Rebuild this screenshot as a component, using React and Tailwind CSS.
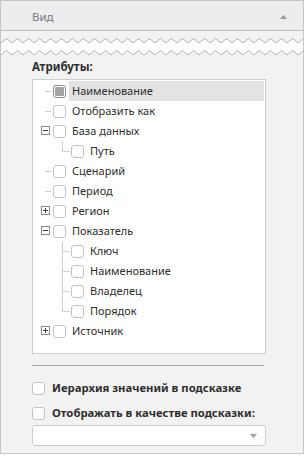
import React from "react";

function Zigzag() {
  const w = 302;
  const period = 11;
  const pts1 = [];
  const pts2 = [];
  for (let x = -period; x <= w + period; x += period) {
    pts1.push(`${x},12`, `${x + period / 2},7.5`);
    pts2.push(`${x},24`, `${x + period / 2},19.5`);
  }
  const line1 = "M" + pts1.join(" L");
  const line2 = "M" + pts2.join(" L");
  return (
    <svg width={w} height={25} className="block">
      <rect x="0" y="0" width={w} height="25" fill="#f2f2f2" />
      <path d={`${line1} L${w + period},25 L${-period},25 Z`} fill="#ffffff" />
      <path d={`${line2} L${w + period},26 L${-period},26 Z`} fill="#f2f2f2" />
      <path d={line1} fill="none" stroke="#b4b4b4" strokeWidth="1" />
      <path d={line2} fill="none" stroke="#b4b4b4" strokeWidth="1" />
    </svg>
  );
}

function Checkbox({ active }) {
  return (
    <div
      className={
        "w-[13px] h-[13px] shrink-0 rounded-[3px] border bg-white flex items-center justify-center " +
        (active ? "border-[#8c8c8c]" : "border-[#c4c4c4]")
      }
    >
      {active && <div className="w-[9px] h-[9px] rounded-[1px] bg-[#a3a3a3]" />}
    </div>
  );
}

function Expander({ open }) {
  return (
    <div className="w-[9px] h-[9px] border border-[#8a8a8a] bg-white relative">
      <div className="absolute left-[1px] top-[3px] w-[5px] h-px bg-[#444]" />
      {!open && <div className="absolute left-[3px] top-[1px] w-px h-[5px] bg-[#444]" />}
    </div>
  );
}

const rows = [
  { label: "Наименование", level: 0, selected: true },
  { label: "Отобразить как", level: 0 },
  { label: "База данных", level: 0, exp: "open" },
  { label: "Путь", level: 1, last: true },
  { label: "Сценарий", level: 0 },
  { label: "Период", level: 0 },
  { label: "Регион", level: 0, exp: "closed" },
  { label: "Показатель", level: 0, exp: "open" },
  { label: "Ключ", level: 1 },
  { label: "Наименование", level: 1 },
  { label: "Владелец", level: 1 },
  { label: "Порядок", level: 1, last: true },
  { label: "Источник", level: 0, exp: "closed" },
];

function Row({ r }) {
  return (
    <div className="flex items-center h-5">
      {r.level === 0 ? (
        <div className="w-5 h-5 relative shrink-0">
          {r.exp ? (
            <div className="absolute left-[8px] top-[5px]">
              <Expander open={r.exp === "open"} />
            </div>
          ) : (
            <div className="absolute left-[12px] top-[10px] w-[6px] h-px bg-[#d0d0d0]" />
          )}
        </div>
      ) : (
        <div className="w-[38px] h-5 relative shrink-0">
          <div
            className={
              "absolute left-[29px] top-0 w-px bg-[#d0d0d0] " + (r.last ? "h-[10px]" : "h-5")
            }
          />
          <div className="absolute left-[29px] top-[10px] w-[8px] h-px bg-[#d0d0d0]" />
        </div>
      )}
      <Checkbox active={r.selected} />
      <div
        className={
          "flex-1 h-5 flex items-center pl-[3px] ml-[3px] mr-px text-[11px] text-[#2e2e2e] " +
          (r.selected ? "bg-[#e3e3e3]" : "")
        }
      >
        {r.label}
      </div>
    </div>
  );
}

export default function App() {
  return (
    <div
      className="w-[304px] h-[454px] border border-[#c6c6c6] bg-[#f2f2f2] flex flex-col overflow-hidden"
      style={{ fontFamily: '"Noto Sans", "Open Sans", sans-serif' }}
    >
      <div className="h-[30px] shrink-0 bg-[#ecedef] border-b border-[#b8bcc3] flex items-center pl-[31px] pr-[16px] pt-[3px]">
        <span className="text-[11.5px] text-[#777782] flex-1">Вид</span>
        <svg width="7" height="4" viewBox="0 0 7 4">
          <path d="M0,4 L3.5,0 L7,4 Z" fill="#9a9a9a" />
        </svg>
      </div>
      <Zigzag />
      <div className="pl-[31px] flex flex-col">
        <div className="mt-[4px] h-[14px] leading-[14px] text-[11.5px] font-bold text-[#2e2e2e]">
          Атрибуты:
        </div>
        <div className="mt-[5px] w-[234px] h-[275px] border border-[#cdcdcd] bg-white pt-px">
          {rows.map((r, i) => (
            <Row key={i} r={r} />
          ))}
        </div>
        <div className="mt-[11px] w-[232px] h-px bg-[#a9a9a9]" />
        <div className="mt-[12px] h-5 flex items-center gap-[7px]">
          <Checkbox />
          <span className="text-[11.3px] font-bold text-[#2e2e2e]">Иерархия значений в подсказке</span>
        </div>
        <div className="mt-[5px] h-5 flex items-center gap-[7px]">
          <Checkbox />
          <span className="text-[11.3px] font-bold text-[#2e2e2e]">Отображать в качестве подсказки:</span>
        </div>
        <div className="mt-[2px] w-[234px] h-[21px] border border-[#cfcfcf] rounded-[3px] bg-white flex items-center justify-end pr-[8px]">
          <svg width="7" height="4" viewBox="0 0 7 4">
            <path d="M0,0 L7,0 L3.5,4 Z" fill="#a0a0a0" />
          </svg>
        </div>
      </div>
    </div>
  );
}
